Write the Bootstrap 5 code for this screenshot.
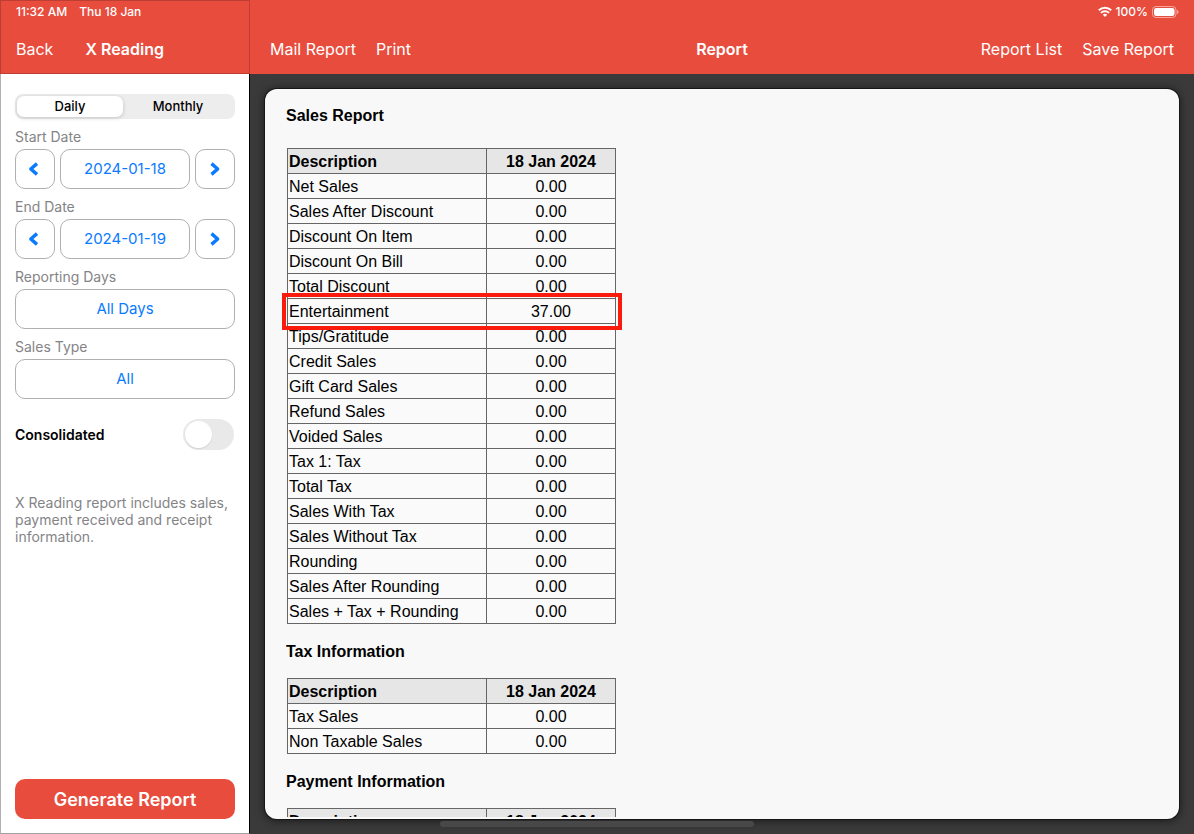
<!DOCTYPE html>
<html lang="en">
<head>
<meta charset="utf-8">
<meta name="viewport" content="width=device-width, initial-scale=1">
<title>X Reading</title>
<link href="https://cdn.jsdelivr.net/npm/bootstrap@5.3.0/dist/css/bootstrap.min.css" rel="stylesheet">
<style>
  :root { --brand: #e84c3d; --tint: #0a7aff; --muted: #848487; --line: #b0b0b0; }
  body { font-family: Inter, "Liberation Sans", sans-serif; color: #000; background: #3a3a3a; }

  .side { width: 250px; border-left: 1px solid #b0b0b0; border-bottom: 1px solid #a0a0a0; border-right: 1px solid #000; background: #fff; }
  .topbar { height: 74px; background: var(--brand); color: #fff; }
  .side .topbar { margin: 0 -1px; box-shadow: inset 0 0 0 1px #bb3f33; padding-left: 16px; }
  .status { height: 24px; font-size: 12px; font-weight: 500; line-height: 24px; }
  .status-right { padding-right: 15px; }
  .bar-row { height: 50px; font-size: 16px; line-height: 50px; }
  .bar-row a { color: #fff; text-decoration: none; }
  .bar-title { font-size: 16px; font-weight: 600; line-height: 50px; }
  .bar-main { padding: 0 20px; }
  .bar-links { gap: 20px; }

  .side-body { padding: 20px 14px 14px; }
  .segments { height: 25px; padding: 2px; border-radius: 8px; background: #ededee; }
  .segments label { border-radius: 7px; font-size: 13px; font-weight: 500; line-height: 21px; text-align: center; }
  .segments label:first-of-type { width: 106px; }
  .segments .btn-check:checked + label { background: #fff; box-shadow: 0 1px 4px rgba(0, 0, 0, .18); }
  .field-name { padding: 8px 0 2px; color: var(--muted); font-size: 14px; line-height: 20px; }
  .pick-group { gap: 5px; }
  .pick { height: 40px; padding: 1px 0 0; border: 1px solid var(--line); border-radius: 10px; background: #fff; color: var(--tint); font-size: 15px; }
  .pick-step { width: 40px; padding: 0; line-height: 1; }
  .pick-step svg { display: block; margin: 0 auto; }
  .toggle-row { margin-top: 20px; padding: 0 1px 0 0; }
  .toggle-row label { font-size: 14px; font-weight: 600; }
  .form-switch .form-check-input { width: 51px; height: 31px; margin: 0; border: 0; background-color: #e9e9ea; box-shadow: none;
    background-image: url("data:image/svg+xml,%3csvg xmlns='http://www.w3.org/2000/svg' viewBox='0 0 31 31'%3e%3ccircle cx='15.5' cy='16.5' r='13.8' fill='%23d8d8da'/%3e%3ccircle cx='15.5' cy='15.5' r='13.5' fill='%23fff'/%3e%3c/svg%3e"); }
  .note { margin: 44px 0 0; color: var(--muted); font-size: 14px; line-height: 17px; }
  .generate { height: 40px; padding: 0; border: 0; border-radius: 10px; background: var(--brand); color: #fff; font-size: 18px; font-weight: 600; }

  .stage { padding: 15px; }
  .sheet { padding-bottom: 2px; border-radius: 12px; background: #f8f8f8; box-shadow: 0 0 0 1px #161616, 0 1px 8px 1px rgba(0, 0, 0, .55); }
  .pages { padding: 0 21px; font-family: "Liberation Sans", sans-serif; }
  .pages h2 { margin: 0; padding: 18px 0 16px; font-size: 16px; font-weight: 700; line-height: 20px; }
  .pages h2:first-child { padding: 17px 0 22px; }
  .report { width: 329px; margin-left: 1px; table-layout: fixed; border-collapse: collapse; border: 1px solid #666; background: #fafafa; font-size: 16px; line-height: 22px; }
  .report th, .report td { height: 25px; padding: 2px 1px 0; border: 1px solid #666; text-align: center; }
  .report thead { background: #e6e6e6; }
  .report th:first-child, .report td:first-child { width: 199px; text-align: left; }
  .flagged { outline: 4px solid #fa1b0c; outline-offset: 2px; }
  .home-bar { left: 50%; bottom: 7px; width: 314px; height: 6px; margin-left: -157px; border-radius: 3px; background: #484848; }
</style>
</head>
<body>
<div class="d-flex vh-100 overflow-hidden position-relative">

  <aside class="side d-flex flex-column flex-shrink-0">
    <header class="topbar">
      <div class="status d-flex"><span>11:32 AM</span><span class="ms-2 ps-1">Thu 18 Jan</span></div>
      <nav class="bar-row d-flex">
        <a href="#back">Back</a>
        <h1 class="bar-title m-0 ms-4 ps-2">X Reading</h1>
      </nav>
    </header>

    <form class="side-body d-flex flex-column flex-grow-1">
      <div class="segments d-flex" role="group" aria-label="Period">
        <input type="radio" class="btn-check" name="period" id="daily" checked>
        <label for="daily">Daily</label>
        <input type="radio" class="btn-check" name="period" id="monthly">
        <label class="flex-grow-1" for="monthly">Monthly</label>
      </div>

      <label class="field-name" for="start">Start Date</label>
      <div class="pick-group d-flex">
        <button type="button" class="pick pick-step" aria-label="Previous start date"><svg width="16" height="14" viewBox="0 0 16 14" fill="none" stroke="currentColor" stroke-width="3.400" stroke-linejoin="round"><path d="M10 1.600 3.800 7l6.200 5.400"/></svg></button>
        <button type="button" class="pick flex-grow-1" id="start">2024-01-18</button>
        <button type="button" class="pick pick-step" aria-label="Next start date"><svg width="16" height="14" viewBox="0 0 16 14" fill="none" stroke="currentColor" stroke-width="3.400" stroke-linejoin="round"><path d="M4.500 1.600 10.700 7l-6.200 5.400"/></svg></button>
      </div>

      <label class="field-name" for="end">End Date</label>
      <div class="pick-group d-flex">
        <button type="button" class="pick pick-step" aria-label="Previous end date"><svg width="16" height="14" viewBox="0 0 16 14" fill="none" stroke="currentColor" stroke-width="3.400" stroke-linejoin="round"><path d="M10 1.600 3.800 7l6.200 5.400"/></svg></button>
        <button type="button" class="pick flex-grow-1" id="end">2024-01-19</button>
        <button type="button" class="pick pick-step" aria-label="Next end date"><svg width="16" height="14" viewBox="0 0 16 14" fill="none" stroke="currentColor" stroke-width="3.400" stroke-linejoin="round"><path d="M4.500 1.600 10.700 7l-6.200 5.400"/></svg></button>
      </div>

      <label class="field-name" for="days">Reporting Days</label>
      <button type="button" class="pick" id="days">All Days</button>

      <label class="field-name" for="type">Sales Type</label>
      <button type="button" class="pick" id="type">All</button>

      <div class="form-switch toggle-row d-flex justify-content-between align-items-center">
        <label for="consolidated">Consolidated</label>
        <input class="form-check-input" type="checkbox" role="switch" id="consolidated">
      </div>

      <p class="note">X Reading report includes sales, payment received and receipt information.</p>
      <button type="button" class="generate mt-auto">Generate Report</button>
    </form>
  </aside>

  <main class="d-flex flex-column flex-grow-1 overflow-hidden">
    <header class="topbar">
      <div class="status status-right d-flex justify-content-end align-items-center">
        <svg width="14" height="12" viewBox="0 0 14 12" fill="none" stroke="#fff" stroke-width="2" aria-label="Wi-Fi"><path d="M.8 4.300a9 9 0 0 1 12.400 0M2.900 6.900a5.900 5.900 0 0 1 8.200 0"/><path d="M7 11 4.800 8.800a3.100 3.100 0 0 1 4.400 0z" fill="#fff" stroke="none"/></svg>
        <span class="mx-1">100%</span>
        <svg width="27" height="12" viewBox="0 0 27 12" aria-label="Battery full"><rect x=".5" y=".5" width="23.500" height="11" rx="3.500" fill="none" stroke="#fff" stroke-opacity=".5"/><rect x="2" y="2" width="20.500" height="8" rx="2.200" fill="#fff"/><path d="M25 4v4c1-.4 1.500-1.200 1.500-2S26 4.400 25 4z" fill="#fff" fill-opacity=".5"/></svg>
      </div>
      <nav class="bar-row bar-main d-flex align-items-center">
        <div class="bar-links d-flex flex-fill w-100"><a href="#mail">Mail Report</a><a href="#print">Print</a></div>
        <h2 class="bar-title m-0">Report</h2>
        <div class="bar-links d-flex flex-fill w-100 justify-content-end"><a href="#list">Report List</a><a href="#save">Save Report</a></div>
      </nav>
    </header>

    <div class="stage d-flex flex-grow-1 overflow-hidden">
      <section class="sheet d-flex flex-column flex-grow-1">
        <div class="pages flex-grow-1 overflow-hidden">
          <h2>Sales Report</h2>
          <table class="report">
            <thead><tr><th>Description</th><th>18 Jan 2024</th></tr></thead>
            <tbody>
              <tr><td>Net Sales</td><td>0.00</td></tr>
              <tr><td>Sales After Discount</td><td>0.00</td></tr>
              <tr><td>Discount On Item</td><td>0.00</td></tr>
              <tr><td>Discount On Bill</td><td>0.00</td></tr>
              <tr><td>Total Discount</td><td>0.00</td></tr>
              <tr class="flagged"><td>Entertainment</td><td>37.00</td></tr>
              <tr><td>Tips/Gratitude</td><td>0.00</td></tr>
              <tr><td>Credit Sales</td><td>0.00</td></tr>
              <tr><td>Gift Card Sales</td><td>0.00</td></tr>
              <tr><td>Refund Sales</td><td>0.00</td></tr>
              <tr><td>Voided Sales</td><td>0.00</td></tr>
              <tr><td>Tax 1: Tax</td><td>0.00</td></tr>
              <tr><td>Total Tax</td><td>0.00</td></tr>
              <tr><td>Sales With Tax</td><td>0.00</td></tr>
              <tr><td>Sales Without Tax</td><td>0.00</td></tr>
              <tr><td>Rounding</td><td>0.00</td></tr>
              <tr><td>Sales After Rounding</td><td>0.00</td></tr>
              <tr><td>Sales + Tax + Rounding</td><td>0.00</td></tr>
            </tbody>
          </table>

          <h2>Tax Information</h2>
          <table class="report">
            <thead><tr><th>Description</th><th>18 Jan 2024</th></tr></thead>
            <tbody>
              <tr><td>Tax Sales</td><td>0.00</td></tr>
              <tr><td>Non Taxable Sales</td><td>0.00</td></tr>
            </tbody>
          </table>

          <h2>Payment Information</h2>
          <table class="report">
            <thead><tr><th>Description</th><th>18 Jan 2024</th></tr></thead>
          </table>
        </div>
      </section>
    </div>
  </main>

  <div class="home-bar position-absolute"></div>
</div>
<script src="https://cdn.jsdelivr.net/npm/bootstrap@5.3.0/dist/js/bootstrap.bundle.min.js"></script>
</body>
</html>
